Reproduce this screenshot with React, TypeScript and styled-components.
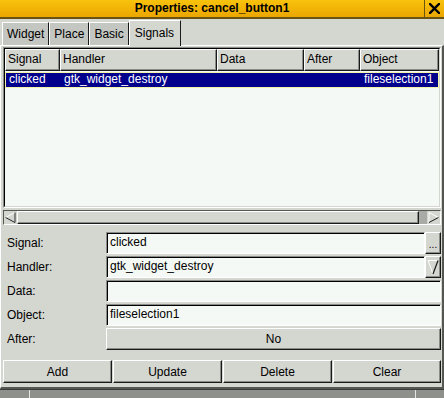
import React from 'react';
import styled, { createGlobalStyle } from 'styled-components';

const BG = '#d4d6d0';
const DARK = '#555753';
const ENTRY = '#f5f9f5';

const Global = createGlobalStyle`
  html, body { margin: 0; padding: 0; background: ${BG}; }
  body { font-family: "Liberation Sans", Arial, sans-serif; font-size: 12px; color: #000; }
  * { box-sizing: border-box; }
`;

const Window = styled.div`
  width: 444px;
  height: 398px;
  background: ${BG};
  display: flex;
  flex-direction: column;
  overflow: hidden;
`;

const TitleBar = styled.div`
  height: 19px;
  flex: none;
  display: flex;
  background: linear-gradient(#f8c30c, #eba600);
  border-bottom: 2px solid #6a5410;
`;

const Title = styled.div`
  flex: 1;
  text-align: center;
  font-weight: bold;
  line-height: 17px;
`;

const Close = styled.div`
  width: 20px;
  border-left: 1px solid #6a5410;
  display: flex;
  align-items: center;
  justify-content: center;
`;

const TabRow = styled.div`
  flex: none;
  height: 25px;
  margin-top: 1px;
  padding-left: 2px;
  display: flex;
  align-items: flex-end;
  position: relative;
  z-index: 1;
`;

const Tab = styled.div<{ $active?: boolean }>`
  height: ${(p) => (p.$active ? 26 : 23)}px;
  margin-bottom: ${(p) => (p.$active ? -1 : 0)}px;
  padding: ${(p) => (p.$active ? '0 6px 2px 5px' : '0 4px')};
  background: ${(p) => (p.$active ? BG : '#c4c6c2')};
  border-top: 1px solid #fff;
  border-left: 1px solid #fff;
  border-right: 1px solid #1a1a1a;
  display: flex;
  align-items: center;
  white-space: nowrap;
`;

const Panel = styled.div`
  flex: none;
  height: 344px;
  border-top: 1px solid #fff;
  border-left: 1px solid #fff;
  border-right: 2px solid ${DARK};
  border-bottom: 2px solid ${DARK};
  display: flex;
  flex-direction: column;
  padding: 1px 1px 4px 1px;
`;

const CList = styled.div`
  height: 161px;
  margin-left: 1px;
  border: 1px solid;
  border-color: #8a8c88 #fff #fff #8a8c88;
  display: flex;
  flex-direction: column;
`;

const CListInner = styled.div`
  flex: 1;
  background: ${ENTRY};
  border: 1px solid;
  border-color: #000 ${BG} ${BG} #000;
`;

const Cols = '55px 157px 87px 56px 1fr';

const HeaderRow = styled.div`
  display: grid;
  grid-template-columns: ${Cols};
  height: 22px;
`;

const HeaderCell = styled.div`
  background: ${BG};
  border-top: 1px solid #fff;
  border-left: 1px solid #fff;
  border-right: 1px solid #1a1a1a;
  border-bottom: 1px solid #1a1a1a;
  box-shadow: inset -1px -1px 0 #8a8c88;
  padding-left: 2px;
  line-height: 19px;
  white-space: nowrap;
  overflow: hidden;
`;

const DataRow = styled.div<{ $selected?: boolean }>`
  display: grid;
  grid-template-columns: ${Cols};
  height: 16px;
  margin-top: 1px;
  background: ${(p) => (p.$selected ? '#00008c' : 'transparent')};
  color: ${(p) => (p.$selected ? '#fff' : '#000')};
  box-shadow: ${(p) => (p.$selected ? 'inset 0 0 0 1px #f2f2a8' : 'none')};
`;

const DataCell = styled.div`
  padding-left: 4px;
  line-height: 15px;
  white-space: nowrap;
  overflow: hidden;
`;

const HScroll = styled.div`
  height: 15px;
  margin: 2px 0 0 1px;
  background: #a9aba7;
  border: 1px solid;
  border-color: ${DARK} #fff #fff ${DARK};
  display: flex;
  align-items: stretch;
`;

const ArrowBtn = styled.div`
  width: 13px;
  flex: none;
  background: ${BG};
  display: flex;
  align-items: center;
  justify-content: center;
`;

const Thumb = styled.div`
  flex: 1;
  margin-right: 8px;
  background: ${BG};
  border-top: 1px solid #fff;
  border-left: 1px solid #fff;
  border-right: 1px solid #1a1a1a;
  border-bottom: 1px solid #1a1a1a;
  box-shadow: inset -1px -1px 0 #8a8c88;
`;

const Form = styled.div`
  margin-top: 7px;
  padding: 0 0 0 5px;
  display: grid;
  grid-template-columns: 99px 1fr;
  grid-auto-rows: 22px;
  row-gap: 2px;
`;

const Label = styled.div`
  line-height: 22px;
`;

const Field = styled.div`
  display: flex;
  min-width: 0;
`;

const Entry = styled.div`
  flex: 1;
  background: ${ENTRY};
  border: 1px solid;
  border-color: #8a8c88 #fff #fff #8a8c88;
  box-shadow: inset 1px 1px 0 #000;
  padding-left: 3px;
  line-height: 19px;
  white-space: nowrap;
`;

const Raised = styled.div`
  background: ${BG};
  border-top: 1px solid #fff;
  border-left: 1px solid #fff;
  border-right: 1px solid #1a1a1a;
  border-bottom: 1px solid #1a1a1a;
  box-shadow: inset -1px -1px 0 #8a8c88;
  display: flex;
  align-items: center;
  justify-content: center;
`;

const SideBtn = styled(Raised)<{ $bottom?: boolean }>`
  width: 16px;
  flex: none;
  align-items: ${(p) => (p.$bottom ? 'flex-end' : 'center')};
  padding-bottom: ${(p) => (p.$bottom ? 3 : 0)}px;
  font-size: 10px;
  line-height: 10px;
`;

const WideBtn = styled(Raised)`
  flex: 1;
  line-height: 20px;
`;

const ButtonRow = styled.div`
  margin-top: 10px;
  height: 23px;
  display: grid;
  grid-template-columns: 109px 109px 109px 1fr;
  column-gap: 1px;
  padding-left: 1px;
`;

const BottomStrip = styled.div`
  flex: 1;
  display: grid;
  grid-template-columns: 29px 1fr 29px;
  background: #8e908c;
  border-top: 1px solid #3a3a3a;
`;

const StripCell = styled.div<{ $edge?: boolean }>`
  border-left: ${(p) => (p.$edge ? '1px solid #e6e6e6' : 'none')};
`;

const CloseIcon = () => (
  <svg width="11" height="11" viewBox="0 0 11 11">
    <path d="M1 1 L10 10 M10 1 L1 10" stroke="#000" strokeWidth="2.4" strokeLinecap="square" />
  </svg>
);

const LeftArrow = () => (
  <svg width="11" height="11" viewBox="0 0 11 11">
    <polygon points="10,0.5 0.5,5.5 10,10.5" fill={BG} stroke="#fff" strokeWidth="1" />
    <path d="M0.5 5.5 L10 10.5 L10 0.5" fill="none" stroke="#1a1a1a" strokeWidth="1" />
  </svg>
);

const RightArrow = () => (
  <svg width="11" height="11" viewBox="0 0 11 11">
    <path d="M1 10.5 L1 0.5 L10.5 5.5" fill="none" stroke="#fff" strokeWidth="1" />
    <path d="M10.5 5.5 L1 10.5" fill="none" stroke="#1a1a1a" strokeWidth="1" />
  </svg>
);

const DownTri = () => (
  <svg width="12" height="16" viewBox="0 0 12 16">
    <path d="M1 1.5 L11 1.5" stroke="#fff" strokeWidth="1" />
    <path d="M1 1.5 L6 15" stroke="#fff" strokeWidth="1" />
    <path d="M11 1.5 L6 15" stroke="#1a1a1a" strokeWidth="1.2" />
  </svg>
);

const columns = ['Signal', 'Handler', 'Data', 'After', 'Object'];
const rows = [{ signal: 'clicked', handler: 'gtk_widget_destroy', data: '', after: '', object: 'fileselection1' }];
const tabs = ['Widget', 'Place', 'Basic', 'Signals'];

export default function App() {
  return (
    <>
      <Global />
      <Window>
        <TitleBar>
          <Title>Properties: cancel_button1</Title>
          <Close>
            <CloseIcon />
          </Close>
        </TitleBar>
        <TabRow>
          {tabs.map((t) => (
            <Tab key={t} $active={t === 'Signals'}>
              {t}
            </Tab>
          ))}
        </TabRow>
        <Panel>
          <CList>
            <CListInner>
              <HeaderRow>
                {columns.map((c) => (
                  <HeaderCell key={c}>{c}</HeaderCell>
                ))}
              </HeaderRow>
              {rows.map((r) => (
                <DataRow key={r.signal} $selected>
                  <DataCell>{r.signal}</DataCell>
                  <DataCell>{r.handler}</DataCell>
                  <DataCell>{r.data}</DataCell>
                  <DataCell>{r.after}</DataCell>
                  <DataCell>{r.object}</DataCell>
                </DataRow>
              ))}
            </CListInner>
          </CList>
          <HScroll>
            <ArrowBtn>
              <LeftArrow />
            </ArrowBtn>
            <Thumb />
            <ArrowBtn>
              <RightArrow />
            </ArrowBtn>
          </HScroll>
          <Form>
            <Label>Signal:</Label>
            <Field>
              <Entry>clicked</Entry>
              <SideBtn $bottom>...</SideBtn>
            </Field>
            <Label>Handler:</Label>
            <Field>
              <Entry>gtk_widget_destroy</Entry>
              <SideBtn>
                <DownTri />
              </SideBtn>
            </Field>
            <Label>Data:</Label>
            <Field>
              <Entry />
            </Field>
            <Label>Object:</Label>
            <Field>
              <Entry>fileselection1</Entry>
            </Field>
            <Label>After:</Label>
            <Field>
              <WideBtn>No</WideBtn>
            </Field>
          </Form>
          <ButtonRow>
            <Raised>Add</Raised>
            <Raised>Update</Raised>
            <Raised>Delete</Raised>
            <Raised>Clear</Raised>
          </ButtonRow>
        </Panel>
        <BottomStrip>
          <StripCell />
          <StripCell $edge />
          <StripCell $edge />
        </BottomStrip>
      </Window>
    </>
  );
}
